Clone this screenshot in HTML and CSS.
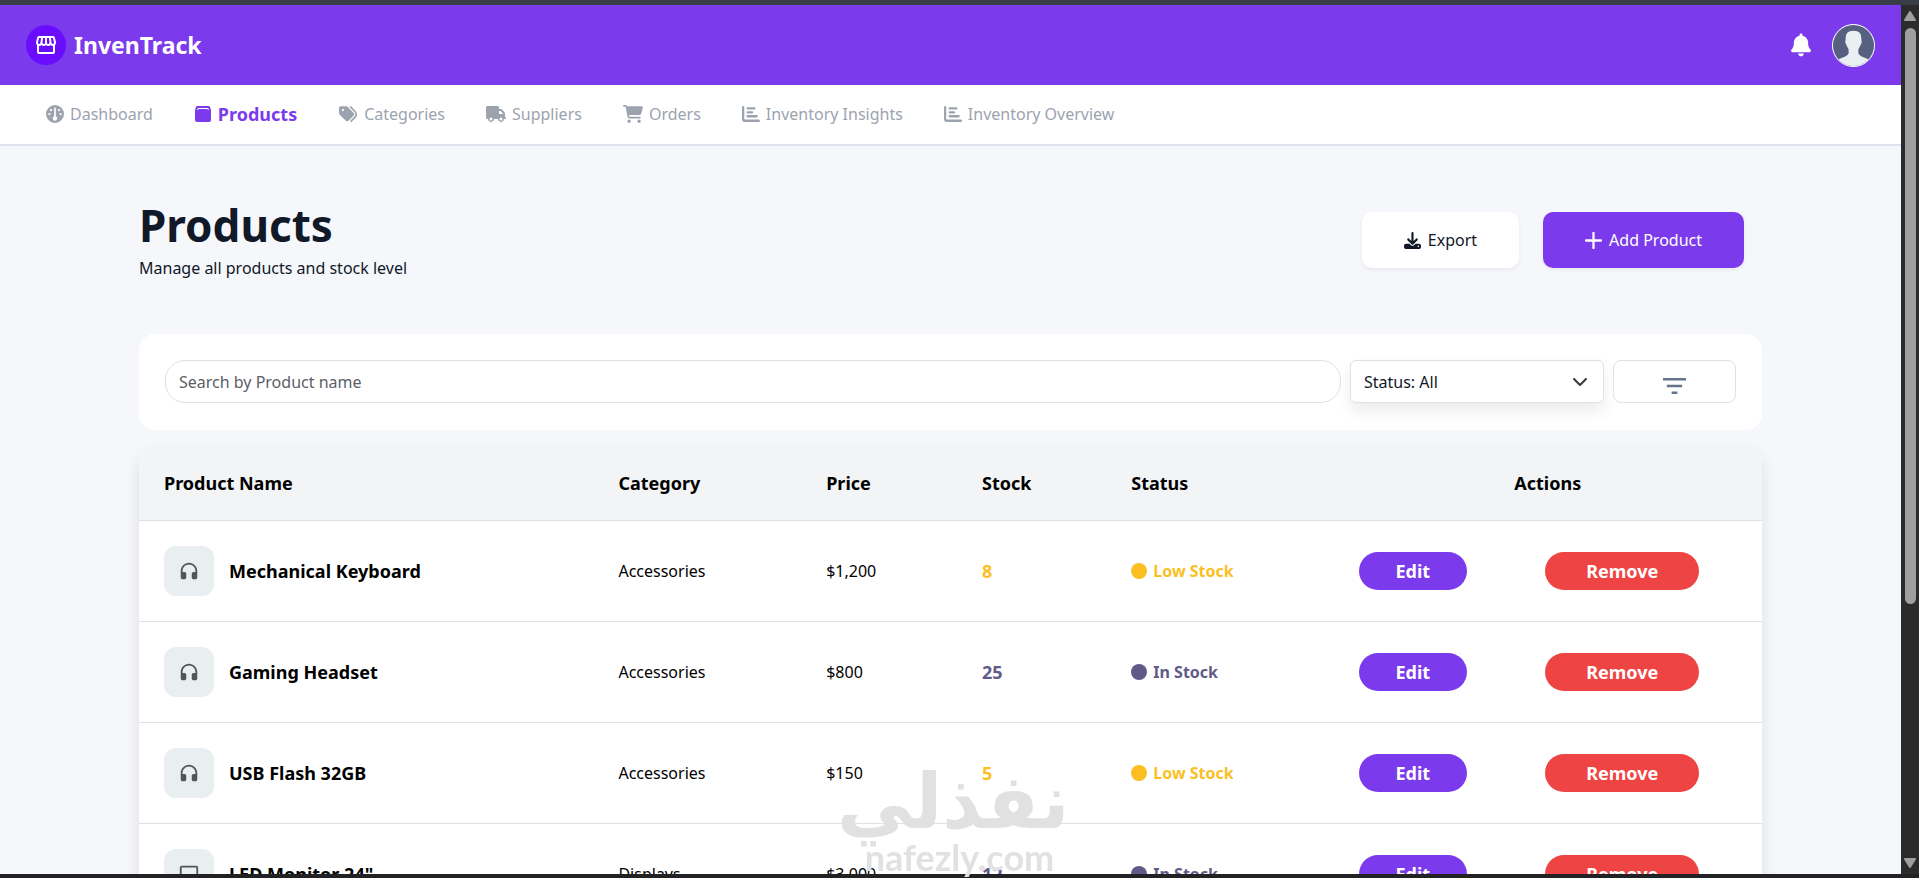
FILE: index.html
```
<!DOCTYPE html>
<html lang="en">
<head>
    <meta charset="UTF-8">
    <meta name="viewport" content="width=device-width, initial-scale=1.0">
    <title>InvenTrack - Products</title>
    <link rel="stylesheet" href="styles.css">
</head>
<body>
    <svg class="sprite" aria-hidden="true">
        <symbol id="i-store" viewBox="0 0 24 24"><path d="M21.9 8.89l-1.05-4.37c-.22-.9-1-1.52-1.91-1.52H5.05c-.9 0-1.69.63-1.9 1.52L2.1 8.89c-.24 1.02-.02 2.06.62 2.88.08.11.19.19.28.29V19c0 1.1.9 2 2 2h14c1.1 0 2-.9 2-2v-6.94c.09-.09.2-.18.28-.28.64-.82.87-1.87.62-2.89zM18.91 4.99l1.05 4.37c.1.42.01.84-.25 1.17-.14.18-.44.47-.94.47-.61 0-1.14-.49-1.21-1.14L16.98 5l1.93-.01zM13 5h1.96l.54 4.52c.05.39-.07.78-.33 1.07-.22.26-.54.41-.95.41-.67 0-1.22-.59-1.22-1.31V5zM8.49 9.52L9.04 5H11v4.69c0 .72-.55 1.31-1.29 1.31-.34 0-.65-.15-.89-.41-.25-.29-.37-.68-.33-1.07zm-4.45-.16L5.05 5h1.97l-.58 4.86c-.08.65-.6 1.14-1.21 1.14-.49 0-.8-.29-.93-.47-.27-.32-.36-.75-.26-1.17zM5 19v-6.03c.08.01.15.03.23.03.87 0 1.66-.36 2.24-.95.6.6 1.4.95 2.31.95.87 0 1.65-.36 2.23-.93.59.57 1.39.93 2.29.93.84 0 1.64-.35 2.24-.95.58.59 1.37.95 2.24.95.08 0 .15-.02.23-.03V19H5z"/></symbol>
        <symbol id="i-bell" viewBox="0 0 448 512"><path d="M224 0c-17.7 0-32 14.3-32 32l0 19.2C119 66 64 130.6 64 208l0 18.8c0 47-17.3 92.4-48.5 127.6l-7.4 8.3c-8.4 9.4-10.4 22.9-5.3 34.4S19.4 416 32 416l384 0c12.6 0 24-7.4 29.2-18.9s3.1-25-5.3-34.4l-7.4-8.3C401.3 319.2 384 273.9 384 226.8l0-18.8c0-77.4-55-142-128-156.8L256 32c0-17.7-14.3-32-32-32zm45.3 493.3c12-12 18.7-28.3 18.7-45.3l-64 0-64 0c0 17 6.7 33.3 18.7 45.3s28.3 18.7 45.3 18.7s33.3-6.7 45.3-18.7z"/></symbol>
        <symbol id="i-gauge" viewBox="0 0 512 512"><path fill-rule="evenodd" d="M256 0a256 256 0 1 0 0 512 256 256 0 1 0 0-512zM232 96a24 24 0 0 1 48 0V322a64 64 0 1 1-48 0zM144 112a32 32 0 1 1 0 64 32 32 0 1 1 0-64zM96 224a32 32 0 1 1 0 64 32 32 0 1 1 0-64zM368 112a32 32 0 1 1 0 64 32 32 0 1 1 0-64zM416 224a32 32 0 1 1 0 64 32 32 0 1 1 0-64z"/></symbol>
        <symbol id="i-bag" viewBox="0 0 18 18"><path fill-rule="evenodd" d="M4 1h10a2 2 0 0 1 2 1l1 3v10a2 2 0 0 1-2 2H3a2 2 0 0 1-2-2V5l1-3a2 2 0 0 1 2-1zM4 3L3 5H4Q4 4 5 4H13Q14 4 14 5H15L14 3z"/></symbol>
        <symbol id="i-tags" viewBox="0 0 512 512"><path d="M345 39.1L472.8 168.4c52.4 53 52.4 138.2 0 191.2L360.8 472.9c-9.3 9.4-24.5 9.5-33.9 .2s-9.5-24.5-.2-33.9L438.6 325.9c33.9-34.3 33.9-89.4 0-123.7L310.9 72.9c-9.3-9.4-9.2-24.6 .2-33.9s24.6-9.2 33.9 .2zM0 229.5L0 80C0 53.5 21.5 32 48 32l149.5 0c17 0 33.3 6.7 45.3 18.7l168 168c25 25 25 65.5 0 90.5L277.3 442.7c-25 25-65.5 25-90.5 0l-168-168C6.7 262.7 0 246.5 0 229.5zM144 144a32 32 0 1 0 -64 0 32 32 0 1 0 64 0z"/></symbol>
        <symbol id="i-truck" viewBox="0 0 640 512"><path d="M48 0C21.5 0 0 21.5 0 48L0 368c0 26.5 21.5 48 48 48l16 0c0 53 43 96 96 96s96-43 96-96l128 0c0 53 43 96 96 96s96-43 96-96l32 0c17.7 0 32-14.3 32-32s-14.3-32-32-32l0-64 0-32 0-18.7c0-17-6.7-33.3-18.7-45.3L512 114.7c-12-12-28.3-18.7-45.3-18.7L416 96l0-48c0-26.5-21.5-48-48-48L48 0zM416 160l50.7 0L544 237.3l0 18.7-128 0 0-96zM112 416a48 48 0 1 1 96 0 48 48 0 1 1 -96 0zm368-48a48 48 0 1 1 0 96 48 48 0 1 1 0-96z"/></symbol>
        <symbol id="i-cart" viewBox="0 0 576 512"><path d="M0 24C0 10.7 10.7 0 24 0L69.5 0c22 0 41.5 12.8 50.6 32l411 0c26.3 0 45.5 25 38.6 50.4l-41 152.3c-8.5 31.4-37 53.3-69.5 53.3l-288.5 0 5.4 28.5c2.2 11.3 12.1 19.5 23.6 19.5L488 336c13.3 0 24 10.7 24 24s-10.7 24-24 24l-288.3 0c-34.6 0-64.3-24.6-70.7-58.5L77.4 54.5c-.7-3.8-4-6.5-7.9-6.5L24 48C10.7 48 0 37.3 0 24zM128 464a48 48 0 1 1 96 0 48 48 0 1 1 -96 0zm336-48a48 48 0 1 1 0 96 48 48 0 1 1 0-96z"/></symbol>
        <symbol id="i-chart" viewBox="0 0 512 512"><path d="M32 64V400Q32 448 80 448H480M160 96H352M160 208H288M160 320H416" fill="none" stroke="currentColor" stroke-width="66" stroke-linecap="round"/></symbol>
        <symbol id="i-download" viewBox="0 0 512 512"><path d="M288 32c0-17.7-14.3-32-32-32s-32 14.3-32 32l0 242.7-73.4-73.4c-12.5-12.5-32.8-12.5-45.3 0s-12.5 32.8 0 45.3l128 128c12.5 12.5 32.8 12.5 45.3 0l128-128c12.5-12.5 12.5-32.8 0-45.3s-32.8-12.5-45.3 0L288 274.7 288 32zM64 352c-35.3 0-64 28.7-64 64l0 32c0 35.3 28.7 64 64 64l384 0c35.3 0 64-28.7 64-64l0-32c0-35.3-28.7-64-64-64l-101.5 0-45.3 45.3c-25 25-65.5 25-90.5 0L165.5 352 64 352zm368 56a24 24 0 1 1 0 48 24 24 0 1 1 0-48z"/></symbol>
        <symbol id="i-plus" viewBox="0 0 18 18"><path d="M9 1V17M1 9H17" fill="none" stroke="currentColor" stroke-width="2.4" stroke-linecap="round"/></symbol>
        <symbol id="i-filter" viewBox="0 0 24 18"><path d="M0 2H24M4 9H20M9 16H15" fill="none" stroke="currentColor" stroke-width="2.6"/></symbol>
        <symbol id="i-headset" viewBox="0 0 24 24"><path d="M12 3c-4.97 0-9 4.03-9 9v7c0 1.1.9 2 2 2h2c1.1 0 2-.9 2-2v-4c0-1.1-.9-2-2-2H5v-1c0-3.87 3.13-7 7-7s7 3.13 7 7v1h-2c-1.1 0-2 .9-2 2v4c0 1.1.9 2 2 2h2c1.1 0 2-.9 2-2v-7c0-4.97-4.03-9-9-9z"/></symbol>
        <symbol id="i-monitor" viewBox="0 0 24 24"><path d="M4 4H20Q21 4 21 5V16Q21 17 20 17H4Q3 17 3 16V5Q3 4 4 4zM8 21H16" fill="none" stroke="currentColor" stroke-width="2"/></symbol>
    </svg>

    <div class="frame">
        <div class="app">
            <header class="topbar">
                <a class="brand" href="#">
                    <span class="brand-logo"><svg><use href="#i-store"/></svg></span>
                    InvenTrack
                </a>
                <div class="topbar-right">
                    <button class="bell" aria-label="Notifications"><svg><use href="#i-bell"/></svg></button>
                    <button class="avatar" aria-label="Account">
                        <svg viewBox="0 0 42 42">
                            <rect width="42" height="42" fill="#566080"/>
                            <path d="M21 6c6 0 8 3 8 8 0 2 1 3 0 5s-2 4-3 6v4c1 4 9 4 12 8v8H4v-8c3-4 11-4 12-8v-4c-1-2-2-4-3-6s0-3 0-5c0-5 2-8 8-8z" fill="#e9eff2"/>
                        </svg>
                    </button>
                </div>
            </header>

            <nav class="menu">
                <a href="#"><svg><use href="#i-gauge"/></svg>Dashboard</a>
                <a href="#" class="active"><svg><use href="#i-bag"/></svg>Products</a>
                <a href="#"><svg class="wide"><use href="#i-tags"/></svg>Categories</a>
                <a href="#"><svg class="wide"><use href="#i-truck"/></svg>Suppliers</a>
                <a href="#"><svg class="wide"><use href="#i-cart"/></svg>Orders</a>
                <a href="#"><svg><use href="#i-chart"/></svg>Inventory Insights</a>
                <a href="#"><svg><use href="#i-chart"/></svg>Inventory Overview</a>
            </nav>

            <main class="content">
                <div class="page-head">
                    <div>
                        <h1>Products</h1>
                        <p>Manage all products and stock level</p>
                    </div>
                    <div class="page-actions">
                        <button class="btn btn-light"><svg><use href="#i-download"/></svg>Export</button>
                        <button class="btn btn-primary"><svg><use href="#i-plus"/></svg>Add Product</button>
                    </div>
                </div>

                <form class="filters">
                    <input class="search" type="text" placeholder="Search by Product name" aria-label="Search by Product name">
                    <select class="status-select" aria-label="Status">
                        <option>Status: All</option>
                        <option>In Stock</option>
                        <option>Low Stock</option>
                    </select>
                    <button class="filter-btn" type="button" aria-label="Filter"><svg><use href="#i-filter"/></svg></button>
                </form>

                <table class="products">
                    <colgroup>
                        <col class="col-name"><col class="col-category"><col class="col-price"><col class="col-stock"><col class="col-status"><col>
                    </colgroup>
                    <thead>
                        <tr>
                            <th>Product Name</th>
                            <th>Category</th>
                            <th>Price</th>
                            <th>Stock</th>
                            <th>Status</th>
                            <th class="center">Actions</th>
                        </tr>
                    </thead>
                    <tbody>
                        <tr class="low">
                            <td><div class="product"><span class="tile"><svg><use href="#i-headset"/></svg></span>Mechanical Keyboard</div></td>
                            <td>Accessories</td>
                            <td>$1,200</td>
                            <td class="stock">8</td>
                            <td><span class="status">Low Stock</span></td>
                            <td><div class="row-actions"><button class="pill edit">Edit</button><button class="pill remove">Remove</button></div></td>
                        </tr>
                        <tr>
                            <td><div class="product"><span class="tile"><svg><use href="#i-headset"/></svg></span>Gaming Headset</div></td>
                            <td>Accessories</td>
                            <td>$800</td>
                            <td class="stock">25</td>
                            <td><span class="status">In Stock</span></td>
                            <td><div class="row-actions"><button class="pill edit">Edit</button><button class="pill remove">Remove</button></div></td>
                        </tr>
                        <tr class="low">
                            <td><div class="product"><span class="tile"><svg><use href="#i-headset"/></svg></span>USB Flash 32GB</div></td>
                            <td>Accessories</td>
                            <td>$150</td>
                            <td class="stock">5</td>
                            <td><span class="status">Low Stock</span></td>
                            <td><div class="row-actions"><button class="pill edit">Edit</button><button class="pill remove">Remove</button></div></td>
                        </tr>
                        <tr>
                            <td><div class="product"><span class="tile"><svg><use href="#i-monitor"/></svg></span>LED Monitor 24"</div></td>
                            <td>Displays</td>
                            <td>$3,000</td>
                            <td class="stock">12</td>
                            <td><span class="status">In Stock</span></td>
                            <td><div class="row-actions"><button class="pill edit">Edit</button><button class="pill remove">Remove</button></div></td>
                        </tr>
                    </tbody>
                </table>
            </main>
        </div>

        <div class="scrollbar" aria-hidden="true">
            <svg viewBox="0 0 12 10"><path d="M6 1L11 9H1z" stroke-width="2" stroke-linejoin="round"/></svg>
            <div class="track"><div class="thumb"></div></div>
            <svg viewBox="0 0 12 10"><path d="M6 9L11 1H1z" stroke-width="2" stroke-linejoin="round"/></svg>
        </div>
    </div>

    <div class="watermark">
        <span class="wm-ar" lang="ar" dir="rtl">نفذلي</span>
        <span class="wm-en">nafezly.com</span>
    </div>
</body>
</html>
```
FILE: styles.css
```
* {
    box-sizing: border-box;
}
body {
    margin: 0;
    height: 100vh;
    overflow: hidden;
    font-family: "Noto Sans", Tahoma, sans-serif;
    font-size: 16px;
    line-height: 24px;
    color: #111827;
    background-color: #f5f7fb;
}
button, input, select {
    font: inherit;
    color: inherit;
}
button {
    border: none;
    cursor: pointer;
}
a {
    color: inherit;
    text-decoration: none;
}
svg {
    fill: currentColor;
    flex-shrink: 0;
}
.sprite {
    display: none;
}

/* window frame */
.frame {
    display: flex;
    height: 100vh;
    border-top: 5px solid #373e47;
    border-bottom: 4px solid #222224;
}
.app {
    flex: 1;
    min-width: 0;
    overflow: hidden;
}
.scrollbar {
    display: flex;
    flex-direction: column;
    align-items: center;
    gap: 7px;
    width: 18px;
    padding: 6px 0;
    background-color: #2b2b2b;
}
.scrollbar svg {
    width: 12px;
    height: 10px;
    fill: #9f9f9f;
    stroke: #9f9f9f;
}
.track {
    flex: 1;
}
.thumb {
    width: 11px;
    height: 70%;
    border-radius: 6px;
    background-color: #9f9f9f;
}

/* header */
.topbar {
    display: flex;
    justify-content: space-between;
    align-items: center;
    height: 80px;
    padding: 0 26px;
    color: #fff;
    background-color: #7c3aed;
}
.brand {
    display: flex;
    align-items: center;
    gap: 8px;
    font-size: 23px;
    font-weight: 700;
}
.brand-logo {
    display: flex;
    justify-content: center;
    align-items: center;
    width: 40px;
    height: 40px;
    border-radius: 50%;
    background-color: #6a0dff;
}
.brand-logo svg {
    width: 24px;
    height: 24px;
}
.topbar-right {
    display: flex;
    align-items: center;
    gap: 21px;
}
.bell {
    padding: 0;
    color: #fff;
    background: none;
}
.bell svg {
    display: block;
    width: 20px;
    height: 24px;
}
.avatar {
    width: 43px;
    height: 43px;
    padding: 0;
    border: 1px solid #fff;
    border-radius: 50%;
    overflow: hidden;
}
.avatar svg {
    display: block;
    width: 100%;
    height: 100%;
}

/* navigation */
.menu {
    display: flex;
    gap: 41px;
    padding: 17px 46px 18px;
    color: #9ca3af;
    background-color: #fff;
    border-bottom: 2px solid #e2e1ef;
}
.menu a {
    display: flex;
    align-items: center;
    gap: 6px;
}
.menu svg {
    width: 18px;
    height: 18px;
}
.menu svg.wide {
    width: 20px;
}
.menu .active {
    color: #7c3aed;
    font-size: 18px;
    font-weight: 700;
}

/* page */
.content {
    padding: 54px 139px;
}
.page-head {
    display: flex;
    justify-content: space-between;
    padding-right: 18px;
    margin-bottom: 54px;
}
.page-head h1 {
    margin: 0 0 6px;
    font-size: 44px;
    line-height: 50px;
}
.page-head p {
    margin: 0;
}
.page-actions {
    display: flex;
    gap: 24px;
    margin-top: 12px;
}
.btn {
    display: flex;
    align-items: center;
    gap: 7px;
    height: 56px;
    padding: 0 42px;
    border-radius: 10px;
    box-shadow: 0 2px 4px rgba(0, 0, 0, 0.06);
}
.btn svg {
    width: 17px;
    height: 17px;
}
.btn-light {
    background-color: #fff;
}
.btn-primary {
    color: #fff;
    background-color: #7c3aed;
}

/* filters */
.filters {
    display: flex;
    gap: 9px;
    padding: 26px 26px 27px;
    margin-bottom: 16px;
    border-radius: 16px;
    background-color: #fff;
}
.search, .status-select, .filter-btn {
    height: 43px;
    border: 1px solid #dee2e6;
    background-color: #fff;
}
.search {
    flex: 1;
    min-width: 0;
    padding: 0 13px;
    border-radius: 20px;
}
.search::placeholder {
    color: #5c6067;
}
.status-select {
    appearance: none;
    width: 254px;
    padding: 0 13px;
    border-radius: 6px;
    background-image: url("data:image/svg+xml,%3Csvg xmlns='http://www.w3.org/2000/svg' viewBox='0 0 16 16'%3E%3Cpath fill='none' stroke='%23343a40' stroke-width='2' stroke-linecap='round' stroke-linejoin='round' d='M2 5l6 6 6-6'/%3E%3C/svg%3E");
    background-repeat: no-repeat;
    background-position: right 15px center;
    background-size: 16px 16px;
    box-shadow: 0 8px 16px rgba(0, 0, 0, 0.08);
}
.filter-btn {
    width: 123px;
    padding: 14px 0 0;
    border-radius: 8px;
    color: #64748b;
}
.filter-btn svg {
    width: 23px;
    height: 18px;
}

/* table */
.products {
    width: 100%;
    table-layout: fixed;
    border-spacing: 0;
    color: #000;
    background-color: #fff;
    border-radius: 16px 16px 0 0;
    box-shadow: 0 8px 16px rgba(0, 0, 0, 0.1);
}
.col-name {
    width: 28%;
}
.col-category {
    width: 12.8%;
}
.col-price {
    width: 9.6%;
}
.col-stock {
    width: 9.2%;
}
.col-status {
    width: 14%;
}
.products th, .products td {
    padding: 25px;
    text-align: left;
    border-bottom: 1px solid #dee2e6;
}
.products th {
    font-size: 18px;
    background-color: #f3f4f6;
}
.products th:first-child {
    border-top-left-radius: 16px;
}
.products th:last-child {
    border-top-right-radius: 16px;
}
.products th.center {
    text-align: center;
}
.product {
    display: flex;
    align-items: center;
    gap: 15px;
    font-size: 18px;
    font-weight: 700;
}
.tile {
    display: flex;
    justify-content: center;
    align-items: center;
    width: 50px;
    height: 50px;
    border-radius: 12px;
    color: #50555a;
    background-color: #e9eef1;
}
.tile svg {
    width: 22px;
    height: 22px;
}
.products .stock, .status {
    color: #5f5a87;
    font-size: 18px;
    font-weight: 700;
}
.products .low .stock, .low .status {
    color: #fbbf24;
}
.status {
    display: flex;
    align-items: center;
    gap: 6px;
    font-size: 16px;
}
.status::before {
    content: "";
    width: 16px;
    height: 16px;
    border-radius: 50%;
    background-color: currentColor;
}
.row-actions {
    display: flex;
    gap: 78px;
}
.pill {
    height: 38px;
    border-radius: 19px;
    color: #fff;
    font-size: 18px;
    font-weight: 700;
}
.edit {
    padding: 0 37px;
    background-color: #7c3aed;
}
.remove {
    padding: 0 41px;
    background-color: #ef4444;
}

/* watermark over the page */
.watermark {
    position: fixed;
    left: 50%;
    bottom: 0;
    width: 220px;
    margin-left: -110px;
    text-align: center;
    color: #e1e1e1;
    pointer-events: none;
}
.wm-ar, .wm-en {
    display: block;
    font-weight: 700;
}
.wm-ar {
    font-family: "DejaVu Sans", sans-serif;
    font-size: 76px;
    line-height: 68px;
}
.wm-en {
    font-family: Lato, sans-serif;
    font-size: 36px;
    line-height: 42px;
}
```
